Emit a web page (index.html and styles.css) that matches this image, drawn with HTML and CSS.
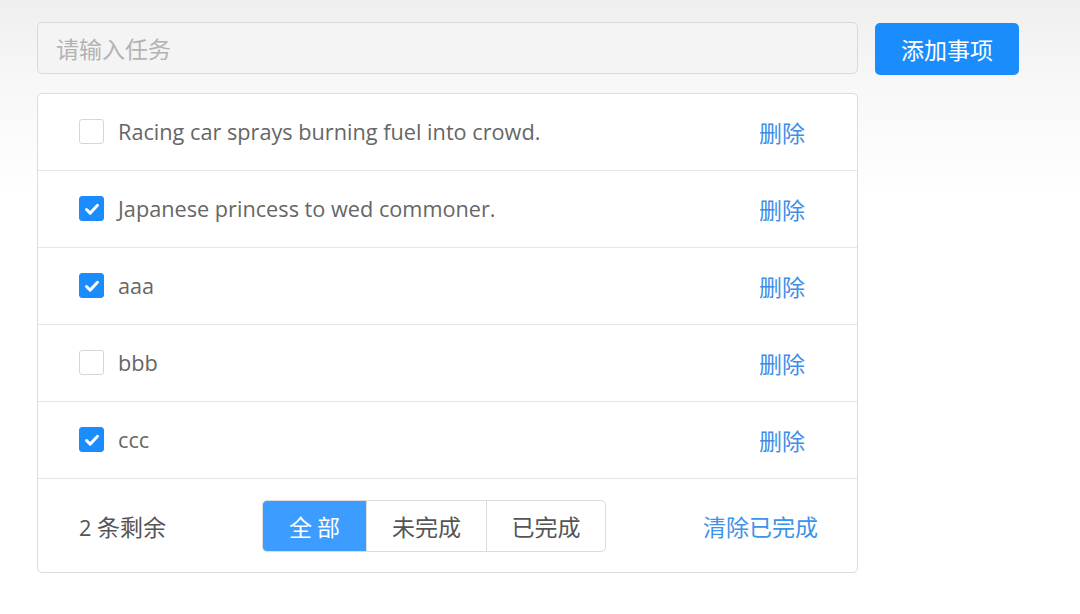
FILE: index.html
```html
<!DOCTYPE html>
<html lang="zh">
<head>
<meta charset="utf-8">
<link rel="stylesheet" href="styles.css">
</head>
<body>
<div class="app">
  <div class="header">
    <div class="input">请输入任务</div>
    <div class="add-btn">添加事项</div>
  </div>
  <div class="list">
    <div class="row">
      <span class="cb"></span>
      <span class="title">Racing car sprays burning fuel into crowd.</span>
      <span class="del">删除</span>
    </div>
    <div class="row">
      <span class="cb checked"><svg viewBox="0 0 24 24"><path d="M6 12.5l4 4 8-8.5"/></svg></span>
      <span class="title">Japanese princess to wed commoner.</span>
      <span class="del">删除</span>
    </div>
    <div class="row">
      <span class="cb checked"><svg viewBox="0 0 24 24"><path d="M6 12.5l4 4 8-8.5"/></svg></span>
      <span class="title">aaa</span>
      <span class="del">删除</span>
    </div>
    <div class="row">
      <span class="cb"></span>
      <span class="title">bbb</span>
      <span class="del">删除</span>
    </div>
    <div class="row">
      <span class="cb checked"><svg viewBox="0 0 24 24"><path d="M6 12.5l4 4 8-8.5"/></svg></span>
      <span class="title">ccc</span>
      <span class="del">删除</span>
    </div>
    <div class="footer">
      <span class="count">2 <span class="cjk">条剩余</span></span>
      <div class="filters">
        <span class="filter active">全 部</span>
        <span class="filter">未完成</span>
        <span class="filter last">已完成</span>
      </div>
      <span class="clear">清除已完成</span>
    </div>
  </div>
</div>
</body>
</html>
```
FILE: styles.css
```css
html, body {
  margin: 0;
  padding: 0;
}
body {
  width: 1080px;
  height: 614px;
  background: linear-gradient(to bottom, #efefef 0px, #f8f8f8 90px, #ffffff 200px);
  font-family: "Open Sans", "Noto Sans CJK SC", sans-serif;
  color: #555;
}
.app {
  padding: 22px 0 0 37px;
}
.header {
  display: flex;
  align-items: flex-start;
  gap: 17px;
}
.input {
  box-sizing: border-box;
  width: 821px;
  height: 52px;
  border: 1px solid #d9d9d9;
  border-radius: 5px;
  background: #f4f4f4;
  padding-left: 18px;
  display: flex;
  align-items: center;
  font-family: "Noto Sans CJK SC", sans-serif;
  font-size: 23px;
  color: #b3b3b3;
}
.add-btn {
  box-sizing: border-box;
  width: 144px;
  height: 52px;
  margin-top: 1px;
  background: #1a8cfb;
  border-radius: 5px;
  color: #fff;
  font-family: "Noto Sans CJK SC", sans-serif;
  font-size: 23px;
  display: flex;
  align-items: center;
  justify-content: center;
}
.list {
  box-sizing: border-box;
  width: 821px;
  margin-top: 18px;
  border: 1px solid #dcdcdc;
  border-radius: 5px;
  background: #fff;
}
.row {
  box-sizing: border-box;
  height: 77px;
  border-bottom: 1px solid #e6e6e6;
  display: flex;
  align-items: center;
  padding: 0 52px 1px 41px;
}
.cb {
  box-sizing: border-box;
  width: 25px;
  height: 25px;
  border: 1px solid #d6d6d6;
  border-radius: 3px;
  background: #fff;
  flex: none;
  display: flex;
  align-items: center;
  justify-content: center;
}
.cb.checked {
  background: #1a8cfb;
  border-color: #1a8cfb;
}
.cb svg {
  width: 22px;
  height: 22px;
  fill: none;
  stroke: #fff;
  stroke-width: 3.2;
  stroke-linecap: round;
  stroke-linejoin: round;
}
.title {
  margin-left: 14px;
  font-size: 21.7px;
  color: #666;
  flex: 1;
}
.del {
  font-family: "Noto Sans CJK SC", sans-serif;
  font-size: 23px;
  color: #3d8ee8;
}
.footer {
  box-sizing: border-box;
  height: 93px;
  display: grid;
  grid-template-columns: 183px auto 1fr;
  align-items: center;
  padding: 0 39px 0 41px;
}
.count {
  font-size: 21.7px;
  color: #555;
}
.cjk {
  font-family: "Noto Sans CJK SC", sans-serif;
  font-size: 23px;
}
.filters {
  display: flex;
  height: 52px;
  border: 1px solid #dcdcdc;
  border-radius: 5px;
  box-sizing: border-box;
  overflow: hidden;
}
.filter {
  box-sizing: border-box;
  width: 120px;
  display: flex;
  align-items: center;
  justify-content: center;
  font-family: "Noto Sans CJK SC", sans-serif;
  font-size: 23px;
  color: #555;
  border-left: 1px solid #dcdcdc;
}
.filter.active {
  width: 103px;
  border-left: none;
  background: #3d9cff;
  color: #fff;
}
.filter.last {
  width: 119px;
}
.clear {
  justify-self: end;
  font-family: "Noto Sans CJK SC", sans-serif;
  font-size: 23px;
  color: #3d92ea;
}
```
